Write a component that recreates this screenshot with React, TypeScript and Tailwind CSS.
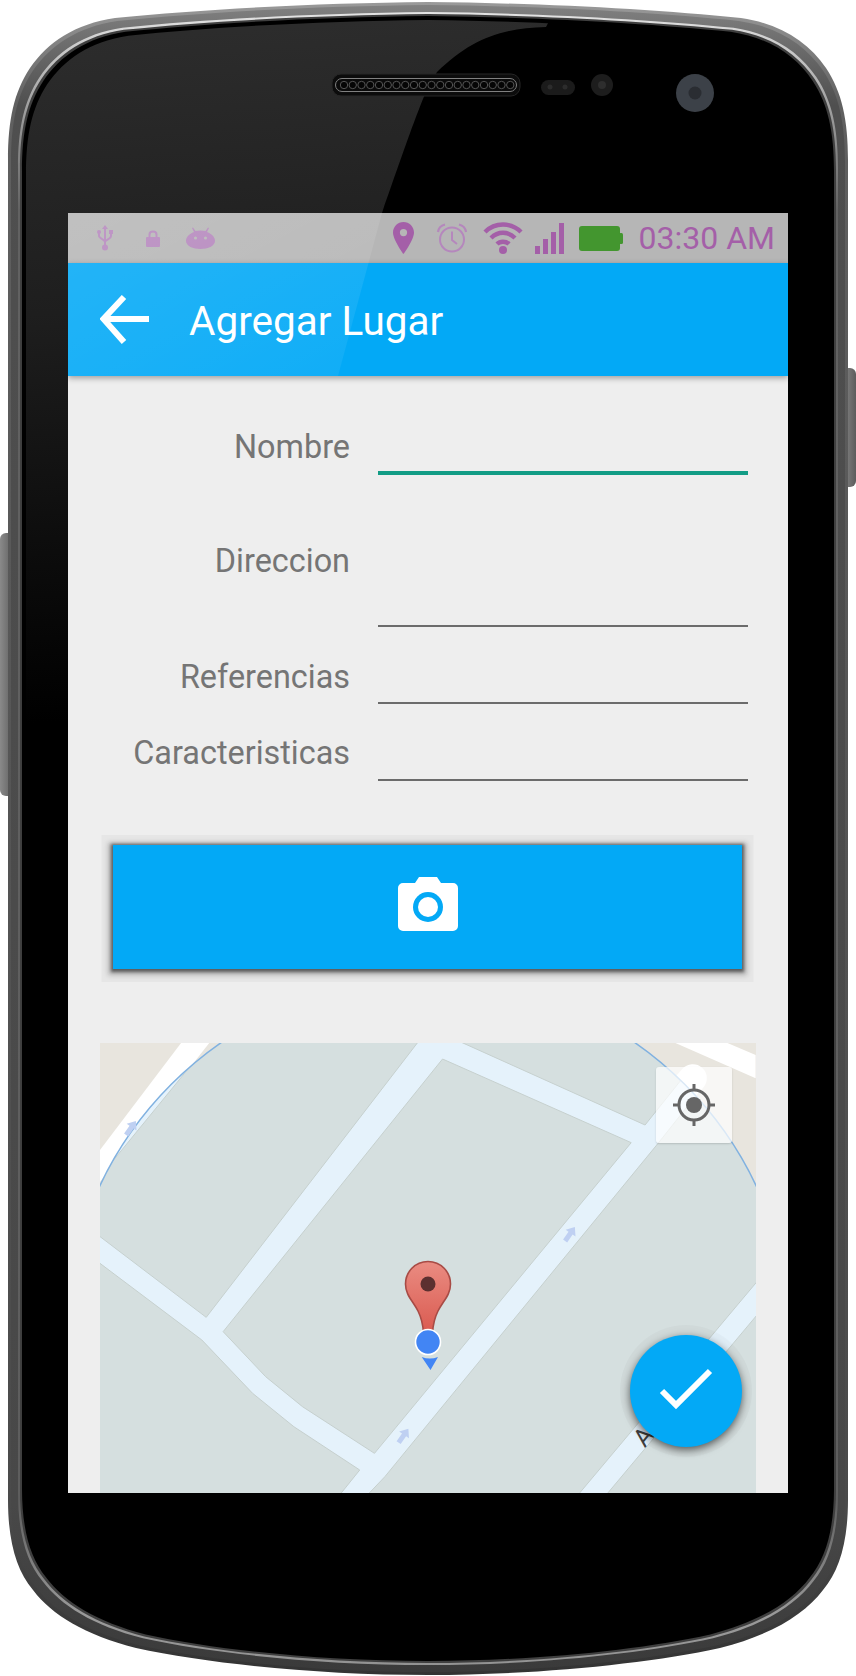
const SILHOUETTE =
  "M428 2 C320 3 205 9 115 18 C75 24 48 42 30 68 C14 92 8 120 8 160 L8 1500 C8 1540 16 1570 33 1590 C52 1615 85 1635 136 1648 C210 1664 320 1675 428 1675 C536 1675 646 1664 720 1648 C771 1635 804 1615 823 1590 C840 1570 848 1540 848 1500 L848 160 C848 120 842 92 826 68 C808 42 781 24 741 18 C651 9 536 3 428 2 Z";

const inset = (i: number) =>
  `translate(428 838.5) scale(${(420 - i) / 420} ${(836.5 - i) / 836.5}) translate(-428 -838.5)`;

// map shapes were read off a zoomed crop, this brings them into map space
const toMap = (pts: number[][]) =>
  pts.map(([x, y]) => `${x / 2.306 - 10},${y / 3 - 13}`).join(" ");

const BLOCKS = [
  [[287, 20], [766, 20], [268, 862], [0, 597], [0, 476.6]],
  [[813, 87], [1248, 338], [656, 1270], [490, 1130], [405, 1040], [307, 905]],
  [[827.6, 20], [1280, 285], [1400, 90], [1400, 20]],
  [[1310, 340], [1450, 110], [1560, 110], [1560, 721], [1122, 1400], [636, 1400], [680, 1340]],
  [[1187, 1400], [1560, 821], [1560, 1400]],
  [[0, 677.5], [258, 930], [375, 1090], [470, 1190], [622, 1320], [572.6, 1400], [0, 1400]],
];

const ROAD_ARROWS = [
  [31, 85],
  [470, 191],
  [303.5, 392.7],
];

function PhoneFrame() {
  const holes = Array.from({ length: 20 }, (_, i) => 344 + i * 8.75);
  return (
    <svg className="absolute inset-0" width="856" height="1676" viewBox="0 0 856 1676">
      <defs>
        <linearGradient id="rimOuter" x1="0" y1="0" x2="0" y2="1">
          <stop offset="0" stopColor="#9a9a9a" />
          <stop offset="0.06" stopColor="#606060" />
          <stop offset="0.9" stopColor="#4a4a4a" />
          <stop offset="1" stopColor="#333333" />
        </linearGradient>
        <linearGradient id="rimMid" x1="0" y1="0" x2="0" y2="1">
          <stop offset="0" stopColor="#808080" />
          <stop offset="0.06" stopColor="#4f4f4f" />
          <stop offset="0.9" stopColor="#484848" />
          <stop offset="1" stopColor="#3a3a3a" />
        </linearGradient>
        <linearGradient id="rimLight" x1="0" y1="0" x2="0" y2="1">
          <stop offset="0" stopColor="#e4e4e4" />
          <stop offset="0.05" stopColor="#a8a8a8" />
          <stop offset="0.12" stopColor="#626262" />
          <stop offset="0.9" stopColor="#5e5e5e" />
          <stop offset="0.97" stopColor="#9a9a9a" />
          <stop offset="1" stopColor="#939393" />
        </linearGradient>
        <linearGradient id="glare" gradientUnits="userSpaceOnUse" x1="60" y1="40" x2="100" y2="720">
          <stop offset="0" stopColor="#2c2c2c" />
          <stop offset="0.4" stopColor="#1e1e1e" />
          <stop offset="0.75" stopColor="#0c0c0c" />
          <stop offset="1" stopColor="#000000" />
        </linearGradient>
        <linearGradient id="sideKey" x1="0" y1="0" x2="1" y2="0">
          <stop offset="0" stopColor="#8a8a8a" />
          <stop offset="1" stopColor="#5c5c5c" />
        </linearGradient>
        <clipPath id="bezel">
          <path d={SILHOUETTE} transform={inset(18)} />
        </clipPath>
      </defs>

      <rect x="0" y="533" width="14" height="263" rx="6" fill="url(#sideKey)" />
      <rect x="842" y="368" width="14" height="119" rx="6" fill="url(#sideKey)" />

      <path d={SILHOUETTE} fill="url(#rimOuter)" />
      <path d={SILHOUETTE} transform={inset(3)} fill="url(#rimMid)" />
      <path d={SILHOUETTE} transform={inset(10)} fill="url(#rimLight)" />
      <path d={SILHOUETTE} transform={inset(12)} fill="#3f3f3f" />
      <path d={SILHOUETTE} transform={inset(14)} fill="#000000" />

      <g clipPath="url(#bezel)">
        <path
          d="M0 0 L560 0 L546 27 C500 28 470 40 437 72 C425 90 418 110 382 213 L338 376 L290 730 L0 730 Z"
          fill="url(#glare)"
        />
      </g>

      {/* speaker */}
      <rect x="332" y="74" width="188" height="22" rx="9" fill="#0c0c0c" stroke="#262626" />
      <rect x="335.5" y="78.5" width="181" height="13" rx="6.5" fill="#0a0a0a" stroke="#808080" />
      {holes.map((x) => (
        <circle key={x} cx={x} cy="85" r="3.7" fill="#050505" stroke="#555555" strokeWidth="1" />
      ))}

      {/* sensors */}
      <rect x="541" y="80" width="34" height="15" rx="7.5" fill="#1b1b1b" />
      <circle cx="550" cy="87" r="2.5" fill="#2c2c2c" />
      <circle cx="565" cy="87" r="2.5" fill="#2c2c2c" />
      <circle cx="602" cy="85" r="11" fill="#1d1d1d" />
      <circle cx="602" cy="85" r="4" fill="#2e2e2e" />
      <circle cx="695" cy="93" r="19" fill="#3c4148" />
      <circle cx="695" cy="93" r="6.5" fill="#2a2d32" />
    </svg>
  );
}

function StatusBar() {
  return (
    <div className="flex h-[50px] items-center bg-[#b6b6b6] pl-[30px] pr-[13px]">
      <svg width="16" height="26" viewBox="0 0 16 26" fill="none" className="ml-[-1px]">
        <path d="M8 0 L11 4 H9 V20 H7 V4 H5 Z" fill="#b587bd" />
        <circle cx="8" cy="22.5" r="3" fill="#b587bd" />
        <path d="M2 7 V11 C2 13 8 15 8 17 C8 15 14 14 14 11 V7" stroke="#b587bd" strokeWidth="2" />
        <rect x="0" y="5" width="4" height="4" rx="2" fill="#b587bd" />
        <rect x="12" y="5" width="4" height="4" fill="#b587bd" />
      </svg>
      <svg width="14" height="17" viewBox="0 0 14 17" fill="none" className="ml-[33px]">
        <rect x="0" y="7" width="14" height="10" rx="1" fill="#b587bd" />
        <path d="M3.5 8 V4.5 C3.5 0.5 10.5 0.5 10.5 4.5 V8" stroke="#b587bd" strokeWidth="2" />
      </svg>
      <svg width="29" height="22" viewBox="0 0 29 22" className="ml-[26px]">
        <path d="M7 0.5 L9.5 4 C12.5 3.2 16.5 3.2 19.5 4 L22 0.5 L23 1 L21 5 C26 7 29 10 29 14 C29 19 22 22 14.5 22 C7 22 0 19 0 14 C0 10 3 7 8 5 L6 1 Z" fill="#b587bd" />
        <circle cx="9.5" cy="11" r="1.6" fill="#b6b6b6" />
        <circle cx="19.5" cy="11" r="1.6" fill="#b6b6b6" />
      </svg>

      <svg width="21" height="32" viewBox="0 0 21 32" className="ml-auto" fillRule="evenodd">
        <path d="M10.5 0 C4.7 0 0 4.7 0 10.5 C0 18 10.5 32 10.5 32 C10.5 32 21 18 21 10.5 C21 4.7 16.3 0 10.5 0 Z M10.5 7 A3.6 3.6 0 1 1 10.5 14.2 A3.6 3.6 0 1 1 10.5 7 Z" fill="#a45fa8" />
      </svg>
      <svg width="32" height="30" viewBox="0 0 32 30" fill="none" stroke="#b587bd" className="ml-[22px]">
        <circle cx="16" cy="16.5" r="12" strokeWidth="2" />
        <path d="M16 8.5 V17 L21 21" strokeWidth="2" />
        <path d="M2 9 C2.5 5 5 2.5 9 1.5" strokeWidth="2.2" />
        <path d="M30 9 C29.5 5 27 2.5 23 1.5" strokeWidth="2.2" />
      </svg>
      <svg width="40" height="32" viewBox="0 0 40 32" fill="none" stroke="#a45fa8" strokeWidth="4.4" className="ml-[15px]">
        <path d="M2 10 C12 0 28 0 38 10" />
        <path d="M8 16 C15 9 25 9 32 16" />
        <path d="M14 22 C17 19 23 19 26 22" />
        <circle cx="20" cy="28" r="4" fill="#a45fa8" stroke="none" />
      </svg>
      <svg width="30" height="31" viewBox="0 0 30 31" fill="#a45fa8" className="ml-[12px]">
        <rect x="0" y="23" width="5" height="8" />
        <rect x="8" y="16" width="5" height="15" />
        <rect x="16" y="9" width="5" height="22" />
        <rect x="24" y="0" width="5" height="31" />
      </svg>
      <svg width="44" height="25" viewBox="0 0 44 25" fill="#43962f" className="ml-[14px]">
        <rect x="0" y="0" width="41" height="25" rx="3" />
        <rect x="40" y="7" width="4" height="11" rx="1.5" />
      </svg>
      <span className="ml-[16px] whitespace-nowrap font-['Roboto',sans-serif] text-[32px] leading-none text-[#a45fa8]">
        03:30 AM
      </span>
    </div>
  );
}

function FormRow({ label, inputHeight, active, className }: { label: string; inputHeight: string; active?: boolean; className: string }) {
  return (
    <div className={`flex ${className}`}>
      <label className="w-[282px] text-right text-[32.4px] leading-[44px] text-[#757575]">{label}</label>
      <div
        className={`ml-[28px] w-[370px] ${inputHeight} ${
          active ? "border-b-4 border-[#129c85]" : "border-b-2 border-[#6b6b6b]"
        }`}
      />
    </div>
  );
}

function MapView() {
  return (
    <div className="relative ml-[32px] mt-[74px] h-[450px] w-[656px]">
      <svg width="656" height="450" viewBox="0 0 656 450" className="block">
        <defs>
          <clipPath id="accuracy">
            <circle cx="328" cy="298" r="363" />
          </clipPath>
          <linearGradient id="pinFill" x1="0" y1="0" x2="0" y2="1">
            <stop offset="0" stopColor="#ea8c82" />
            <stop offset="1" stopColor="#da5a50" />
          </linearGradient>
        </defs>

        <rect width="656" height="450" fill="#e8e5de" />
        <polygon points={toMap([[210, 39], [275, 39], [23, 455], [23, 360]])} fill="#ffffff" />
        <polygon points={toMap([[1350, 39], [1470, 39], [1535, 75], [1535, 145]])} fill="#ffffff" />
        <line x1="545" y1="90" x2="592.8" y2="35.3" stroke="#ffffff" strokeWidth="28" strokeLinecap="round" />

        <g clipPath="url(#accuracy)">
          <rect width="656" height="450" fill="#e5f2fb" />
          {BLOCKS.map((block, i) => (
            <polygon key={i} points={toMap(block)} fill="#d5dfdf" stroke="#c6d0ce" strokeWidth="1" />
          ))}
        </g>
        <circle cx="328" cy="298" r="363" fill="none" stroke="#80b1e0" strokeWidth="1.5" />

        {ROAD_ARROWS.map(([x, y]) => (
          <path
            key={x}
            transform={`translate(${x} ${y}) rotate(35)`}
            d="M0 -8.5 L6 -1 H2.5 V8.5 H-2.5 V-1 H-6 Z"
            fill="#bfd0f2"
          />
        ))}

        <text
          x="550"
          y="399"
          transform="rotate(-50 550 399)"
          fontFamily="Roboto, sans-serif"
          fontSize="25"
          textAnchor="middle"
          fill="#3f3f3f"
        >
          A
        </text>

        {/* marker */}
        <path
          d="M328 218.5 C315 218.5 305.5 229 305.5 241 C305.5 252 313 258 318 268 C321 274 323 282 323.5 290 L332.5 290 C333 282 335 274 338 268 C343 258 350.5 252 350.5 241 C350.5 229 341 218.5 328 218.5 Z"
          fill="url(#pinFill)"
          stroke="#a84b45"
          strokeWidth="1.6"
        />
        <circle cx="328" cy="241" r="7.5" fill="#5c3030" />
        <circle cx="328" cy="299" r="12.5" fill="#4285f4" stroke="#ffffff" strokeWidth="1.6" />
        <path d="M321.7 314 Q330 317 338 314 L330.5 327 Z" fill="#4285f4" />
      </svg>

      <button className="absolute left-[556px] top-[24px] flex h-[76px] w-[76px] items-center justify-center rounded-[3px] bg-white/70 shadow-[0_1px_2px_rgba(0,0,0,0.15)]">
        <svg width="42" height="42" viewBox="0 0 42 42" fill="none" stroke="#666666" strokeWidth="3">
          <circle cx="21" cy="21" r="15" />
          <circle cx="21" cy="21" r="8" fill="#666666" stroke="none" />
          <path d="M21 0 V6 M21 36 V42 M0 21 H6 M36 21 H42" />
        </svg>
      </button>
    </div>
  );
}

export default function App() {
  return (
    <div className="relative h-[1676px] w-[856px] overflow-hidden bg-white pl-[68px] pt-[213px] font-['Roboto',sans-serif]">
      <PhoneFrame />

      <div className="relative flex h-[1280px] w-[720px] flex-col overflow-hidden bg-[#eeeeee]">
        <StatusBar />

        <header className="relative z-10 flex h-[113px] items-center bg-[#03a9f6] pl-[32px] shadow-[0_2px_6px_rgba(0,0,0,0.35)]">
          <svg width="50" height="50" viewBox="0 0 50 50" fill="none" stroke="#ffffff" strokeWidth="6">
            <path d="M3 24 H49" />
            <path d="M24 2 L3.5 24 L24 47" />
          </svg>
          <h1 className="ml-[39px] mt-[4px] text-[40.5px] font-normal text-white">Agregar Lugar</h1>
        </header>

        <FormRow label="Nombre" inputHeight="h-[50px]" active className="mt-[49px]" />
        <FormRow label="Direccion" inputHeight="h-[88px]" className="mt-[64px]" />
        <FormRow label="Referencias" inputHeight="h-[49px]" className="mt-[28px]" />
        <FormRow label="Caracteristicas" inputHeight="h-[50px]" className="mt-[27px]" />

        <button className="ml-[45px] mt-[64px] flex h-[124px] w-[629px] shrink-0 items-center justify-center bg-[#03a9f6] shadow-[0_1px_3px_2px_rgba(0,0,0,0.5),0_1.5px_5px_5px_rgba(0,0,0,0.2),0_1.5px_0_11.5px_#e6e6e6]">
          <svg width="60" height="55" viewBox="0 0 60 55" className="mb-[6px]">
            <path d="M17 6 L21 0 H39 L43 6 H55 A5 5 0 0 1 60 11 V49 A5 5 0 0 1 55 54 H5 A5 5 0 0 1 0 49 V11 A5 5 0 0 1 5 6 Z" fill="#ffffff" />
            <circle cx="30" cy="30" r="15" fill="#03a9f6" />
            <circle cx="30" cy="30" r="10" fill="#ffffff" />
          </svg>
        </button>

        <MapView />

        <button className="absolute bottom-[46px] right-[46px] flex h-[112px] w-[112px] items-center justify-center rounded-full bg-[#03a9f6] shadow-[0_3px_8px_rgba(0,0,0,0.6),0_0_0_10px_rgba(0,0,0,0.025)]">
          <svg width="60" height="46" viewBox="0 0 60 46" fill="none" stroke="#ffffff" strokeWidth="6">
            <path d="M6 23 L20 37 L54 3" />
          </svg>
        </button>

        {/* glass reflection over the top bars */}
        <svg className="pointer-events-none absolute left-0 top-0 z-20" width="720" height="163" viewBox="0 0 720 163">
          <defs>
            <linearGradient id="sheen" x1="0" y1="0" x2="1" y2="1">
              <stop offset="0" stopColor="#ffffff" stopOpacity="0.14" />
              <stop offset="1" stopColor="#ffffff" stopOpacity="0.05" />
            </linearGradient>
          </defs>
          <polygon points="0,0 314,0 270,163 0,163" fill="url(#sheen)" />
        </svg>
      </div>
    </div>
  );
}
